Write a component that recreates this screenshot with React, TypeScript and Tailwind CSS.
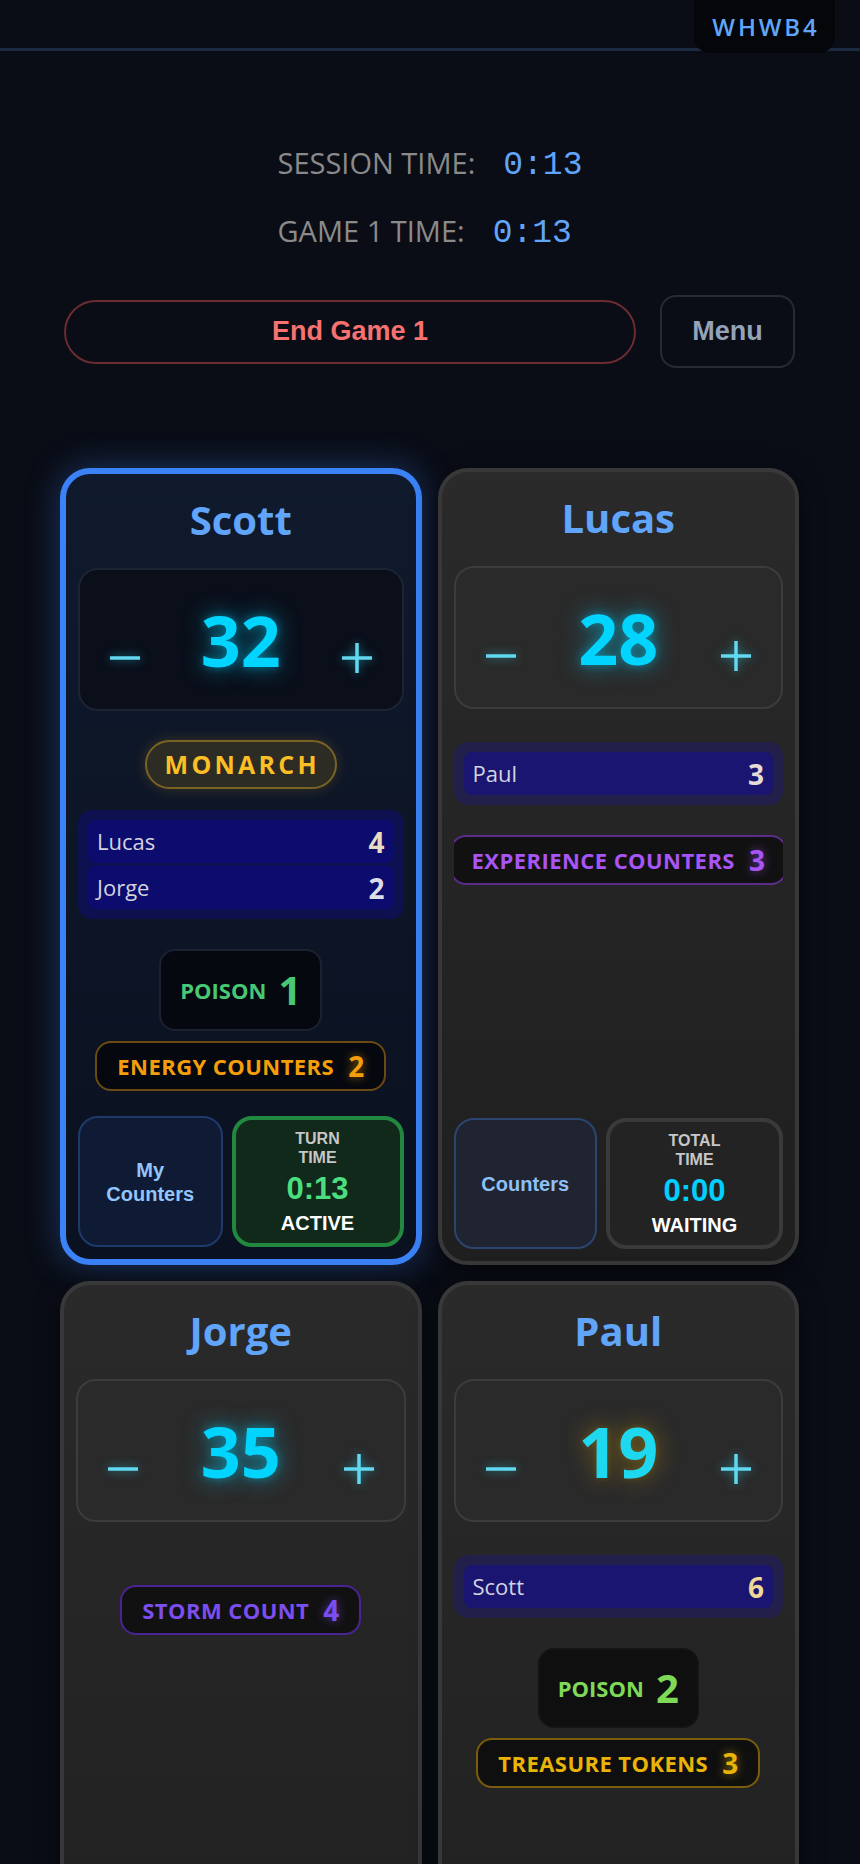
import React from "react";

const OPEN = "font-['Open_Sans','Noto_Sans',sans-serif]";
const ARIAL = "font-['Liberation_Sans',Arial,sans-serif]";
const MONO = "font-['Liberation_Mono','DejaVu_Sans_Mono',monospace]";

type Cmd = { name: string; value: number; color: string };
type Counter =
  | { type: "poison"; value: number; box: string; text: string }
  | { type: "pill"; label: string; value: number; box: string; text: string; glow: string };

type Player = {
  name: string;
  life: number;
  active?: boolean;
  warn?: boolean;
  monarch?: boolean;
  cmd: Cmd[];
  counters: Counter[];
  btn: string;
  timerTitle: string;
  timerValue: string;
  timerStatus: string;
  timerWidth: string;
};

function Sign({ plus }: { plus?: boolean }) {
  return (
    <svg
      width="32"
      height="32"
      viewBox="0 0 32 32"
      className="[filter:drop-shadow(0_0_5px_rgba(34,211,238,0.55))]"
    >
      <path d="M1 16H31" stroke="#62d9f0" strokeWidth="3.5" />
      {plus ? <path d="M16 1V31" stroke="#62d9f0" strokeWidth="3.5" /> : null}
    </svg>
  );
}

function LifeBox({ value, active, warn }: { value: number; active?: boolean; warn?: boolean }) {
  const box = active
    ? "flex h-[143px] items-center justify-between rounded-[20px] border-2 border-[#1c2333] bg-[#0a0f1a] px-[15px]"
    : "flex h-[143px] items-center justify-between rounded-[20px] border-2 border-[#3c3c3c] bg-[#2a2a2a] px-[15px]";
  const num = warn
    ? "text-[70px] font-bold leading-none text-[#1ed8f0] [text-shadow:0_0_24px_rgba(234,179,8,0.4),0_0_6px_rgba(234,179,8,0.2)]"
    : "text-[70px] font-bold leading-none text-[#00d4ff] [text-shadow:0_0_22px_rgba(0,212,255,0.55),0_0_8px_rgba(0,212,255,0.35)]";
  return (
    <div className={box}>
      <div className="flex w-[60px] justify-center pt-[36px]">
        <Sign />
      </div>
      <div className={num}>{value}</div>
      <div className="flex w-[60px] justify-center pt-[36px]">
        <Sign plus />
      </div>
    </div>
  );
}

function Card({ p }: { p: Player }) {
  const cardCls = p.active
    ? "flex flex-col rounded-[30px] border-[6px] border-[#3b82f6] p-3 [background:linear-gradient(180deg,#101a2d,#0a1120)] shadow-[0_0_34px_rgba(59,130,246,0.35)]"
    : "flex flex-col rounded-[30px] border-4 border-[#383838] p-3 [background:linear-gradient(180deg,#2a2a2a,#1f1f1f)] shadow-[0_6px_24px_rgba(0,0,0,0.5)]";
  const cmdBox = p.active
    ? "flex flex-col gap-[3px] rounded-[14px] bg-[#0d1150] p-[10px]"
    : "flex flex-col gap-[3px] rounded-[14px] bg-[#221f4a] p-[10px]";
  const cmdRow = p.active
    ? "flex h-[43px] items-center justify-between rounded-[8px] bg-[#0c0b6e] px-[9px]"
    : "flex h-[43px] items-center justify-between rounded-[8px] bg-[#1b1572] px-[9px]";
  const btnCls = p.active
    ? "flex h-[131px] min-w-0 flex-1 items-center justify-center rounded-[20px] border-2 border-[#1e3a6b] bg-[#0f1b35] px-3 text-center text-[20px] font-bold leading-[24px] text-[#93c5fd]"
    : "flex h-[131px] min-w-0 flex-1 items-center justify-center rounded-[20px] border-2 border-[#2a4570] bg-[#1f2430] px-3 text-center text-[20px] font-bold leading-[24px] text-[#8ec0f5]";
  const timerCls = p.active
    ? "flex h-[131px] shrink-0 flex-col items-center justify-center rounded-[20px] border-4 border-[#22873f] bg-[#11291a]"
    : "flex h-[131px] shrink-0 flex-col items-center justify-center rounded-[20px] border-4 border-[#3a3a3a] bg-[#232323]";
  const timerVal = p.active
    ? "my-1 text-[31px] font-bold leading-[36px] text-[#4ade80]"
    : "my-1 text-[31px] font-bold leading-[36px] text-[#00cfff]";

  return (
    <div className={cardCls}>
      <div className="mt-[10px] mb-6 text-center text-[40px] font-bold leading-[48px] text-[#60a5fa]">
        {p.name}
      </div>
      <LifeBox value={p.life} active={p.active} warn={p.warn} />

      {p.monarch ? (
        <div className="mt-[29px] flex justify-center">
          <div className="flex h-[49px] items-center rounded-full border-2 border-[#7a6223] bg-[#2c2b24] pl-[18px] pr-[15px] shadow-[0_0_14px_rgba(251,191,36,0.18)]">
            <span className="text-[25px] font-bold leading-none tracking-[0.13em] text-[#fbbf24]">MONARCH</span>
          </div>
        </div>
      ) : null}

      <div className={p.monarch ? "mt-[21px]" : "mt-[33px]"}>
        {p.cmd.length > 0 ? (
          <div className={cmdBox}>
            {p.cmd.map((c) => (
              <div key={c.name} className={cmdRow}>
                <span className="text-[22px] font-medium text-[#d3d3de]">{c.name}</span>
                <span className={c.color}>{c.value}</span>
              </div>
            ))}
          </div>
        ) : null}
      </div>

      <div className="mt-[30px] flex flex-col items-center gap-[10px] overflow-hidden">
        {p.counters.map((c, i) =>
          c.type === "poison" ? (
            <div key={i} className={c.box}>
              <span className={`text-[22px] font-bold ${c.text}`}>POISON</span>
              <span className={`text-[40px] font-bold leading-none ${c.text}`}>{c.value}</span>
            </div>
          ) : (
            <div key={i} className="flex w-full justify-center">
              <div className={c.box}>
                <span className={`whitespace-nowrap text-[22px] font-bold tracking-[0.02em] ${c.text}`}>{c.label}</span>
                <span className={`text-[28px] font-bold leading-none ${c.text} ${c.glow}`}>{c.value}</span>
              </div>
            </div>
          )
        )}
      </div>

      <div className={`${ARIAL} mt-auto flex gap-[9px] pt-[25px]`}>
        <div className={btnCls}>{p.btn}</div>
        <div className={`${timerCls} ${p.timerWidth}`}>
          <div className="max-w-[60px] text-center text-[16px] font-bold leading-[19px] text-[#c7c7c7]">
            {p.timerTitle}
          </div>
          <div className={timerVal}>{p.timerValue}</div>
          <div className="text-[20px] font-bold leading-[24px] text-white">{p.timerStatus}</div>
        </div>
      </div>
    </div>
  );
}

const PILL =
  "flex h-[50px] shrink-0 items-center gap-[14px] rounded-2xl border-2 px-5";

const players: Player[] = [
  {
    name: "Scott",
    life: 32,
    active: true,
    monarch: true,
    cmd: [
      { name: "Lucas", value: 4, color: "text-[28px] font-bold leading-none text-[#e8dcc0]" },
      { name: "Jorge", value: 2, color: "text-[28px] font-bold leading-none text-[#dddde8]" },
    ],
    counters: [
      {
        type: "poison",
        value: 1,
        box: "flex h-[82px] items-center gap-3 rounded-2xl border-2 border-[#1c2130] bg-[#05080f] px-[19px]",
        text: "text-[#48c774]",
      },
      {
        type: "pill",
        label: "ENERGY COUNTERS",
        value: 2,
        box: `${PILL} border-[#6b4a12] bg-[#05080f]`,
        text: "text-[#f59e0b]",
        glow: "[text-shadow:0_0_10px_rgba(245,158,11,0.6)]",
      },
    ],
    btn: "My Counters",
    timerTitle: "TURN TIME",
    timerValue: "0:13",
    timerStatus: "ACTIVE",
    timerWidth: "w-[172px]",
  },
  {
    name: "Lucas",
    life: 28,
    cmd: [{ name: "Paul", value: 3, color: "text-[28px] font-bold leading-none text-[#e6dcd6]" }],
    counters: [
      {
        type: "pill",
        label: "EXPERIENCE COUNTERS",
        value: 3,
        box: `${PILL} border-[#5b2d8a] bg-[#111111]`,
        text: "text-[#a855f7]",
        glow: "[text-shadow:0_0_10px_rgba(168,85,247,0.6)]",
      },
    ],
    btn: "Counters",
    timerTitle: "TOTAL TIME",
    timerValue: "0:00",
    timerStatus: "WAITING",
    timerWidth: "w-[177px]",
  },
  {
    name: "Jorge",
    life: 35,
    cmd: [],
    counters: [
      {
        type: "pill",
        label: "STORM COUNT",
        value: 4,
        box: `${PILL} border-[#4a2394] bg-[#111111]`,
        text: "text-[#7c4ef0]",
        glow: "[text-shadow:0_0_10px_rgba(124,78,240,0.6)]",
      },
    ],
    btn: "Counters",
    timerTitle: "TOTAL TIME",
    timerValue: "0:00",
    timerStatus: "WAITING",
    timerWidth: "w-[177px]",
  },
  {
    name: "Paul",
    life: 19,
    warn: true,
    cmd: [{ name: "Scott", value: 6, color: "text-[28px] font-bold leading-none text-[#f0d898]" }],
    counters: [
      {
        type: "poison",
        value: 2,
        box: "flex h-[80px] items-center gap-3 rounded-2xl border-2 border-[#141414] bg-[#0f0f0f] px-[18px]",
        text: "text-[#7ed957]",
      },
      {
        type: "pill",
        label: "TREASURE TOKENS",
        value: 3,
        box: `${PILL} border-[#7a5c0a] bg-[#0f0f0f]`,
        text: "text-[#eab308]",
        glow: "[text-shadow:0_0_10px_rgba(234,179,8,0.6)]",
      },
    ],
    btn: "Counters",
    timerTitle: "TOTAL TIME",
    timerValue: "0:00",
    timerStatus: "WAITING",
    timerWidth: "w-[177px]",
  },
];

export default function App() {
  return (
    <div className={`${OPEN} min-h-screen w-full overflow-hidden bg-[#0a0d16] pb-10`}>
      <header className="relative h-[51px] border-b-[3px] border-[#1c2a42]">
        <div className="absolute right-[25px] top-0 z-10 flex h-[53px] w-[141px] items-center justify-center rounded-b-2xl bg-[#04060a]">
          <span className="pl-[3px] text-[24px] font-semibold leading-none tracking-[0.12em] text-[#60a5fa]">
            WHWB4
          </span>
        </div>
      </header>

      <section className="mt-[92px] flex justify-center">
        <div className="flex flex-col items-start gap-[28px]">
          <div className="flex h-[40px] items-baseline gap-[28px]">
            <span className="text-[29px] font-medium leading-[40px] text-[#8a8a8a]">SESSION TIME:</span>
            <span className={`${MONO} text-[33px] font-normal leading-[40px] text-[#60a5fa]`}>0:13</span>
          </div>
          <div className="flex h-[40px] items-baseline gap-[28px]">
            <span className="text-[29px] font-medium leading-[40px] text-[#8a8a8a]">GAME 1 TIME:</span>
            <span className={`${MONO} text-[33px] font-normal leading-[40px] text-[#60a5fa]`}>0:13</span>
          </div>
        </div>
      </section>

      <div className={`${ARIAL} mt-[44px] flex items-center gap-6 pl-[64px] pr-[65px]`}>
        <button className="h-[64px] flex-1 rounded-full border-2 border-[#6b2b31] bg-transparent text-[27px] font-bold text-[#f87171]">
          End Game 1
        </button>
        <button className="h-[73px] w-[135px] rounded-2xl border-2 border-[#262b36] bg-transparent text-[27px] font-bold text-[#94a3b8]">
          Menu
        </button>
      </div>

      <main className="mt-[100px] grid auto-rows-fr grid-cols-2 gap-4 pl-[60px] pr-[61px]">
        {players.map((p) => (
          <Card key={p.name} p={p} />
        ))}
      </main>
    </div>
  );
}
